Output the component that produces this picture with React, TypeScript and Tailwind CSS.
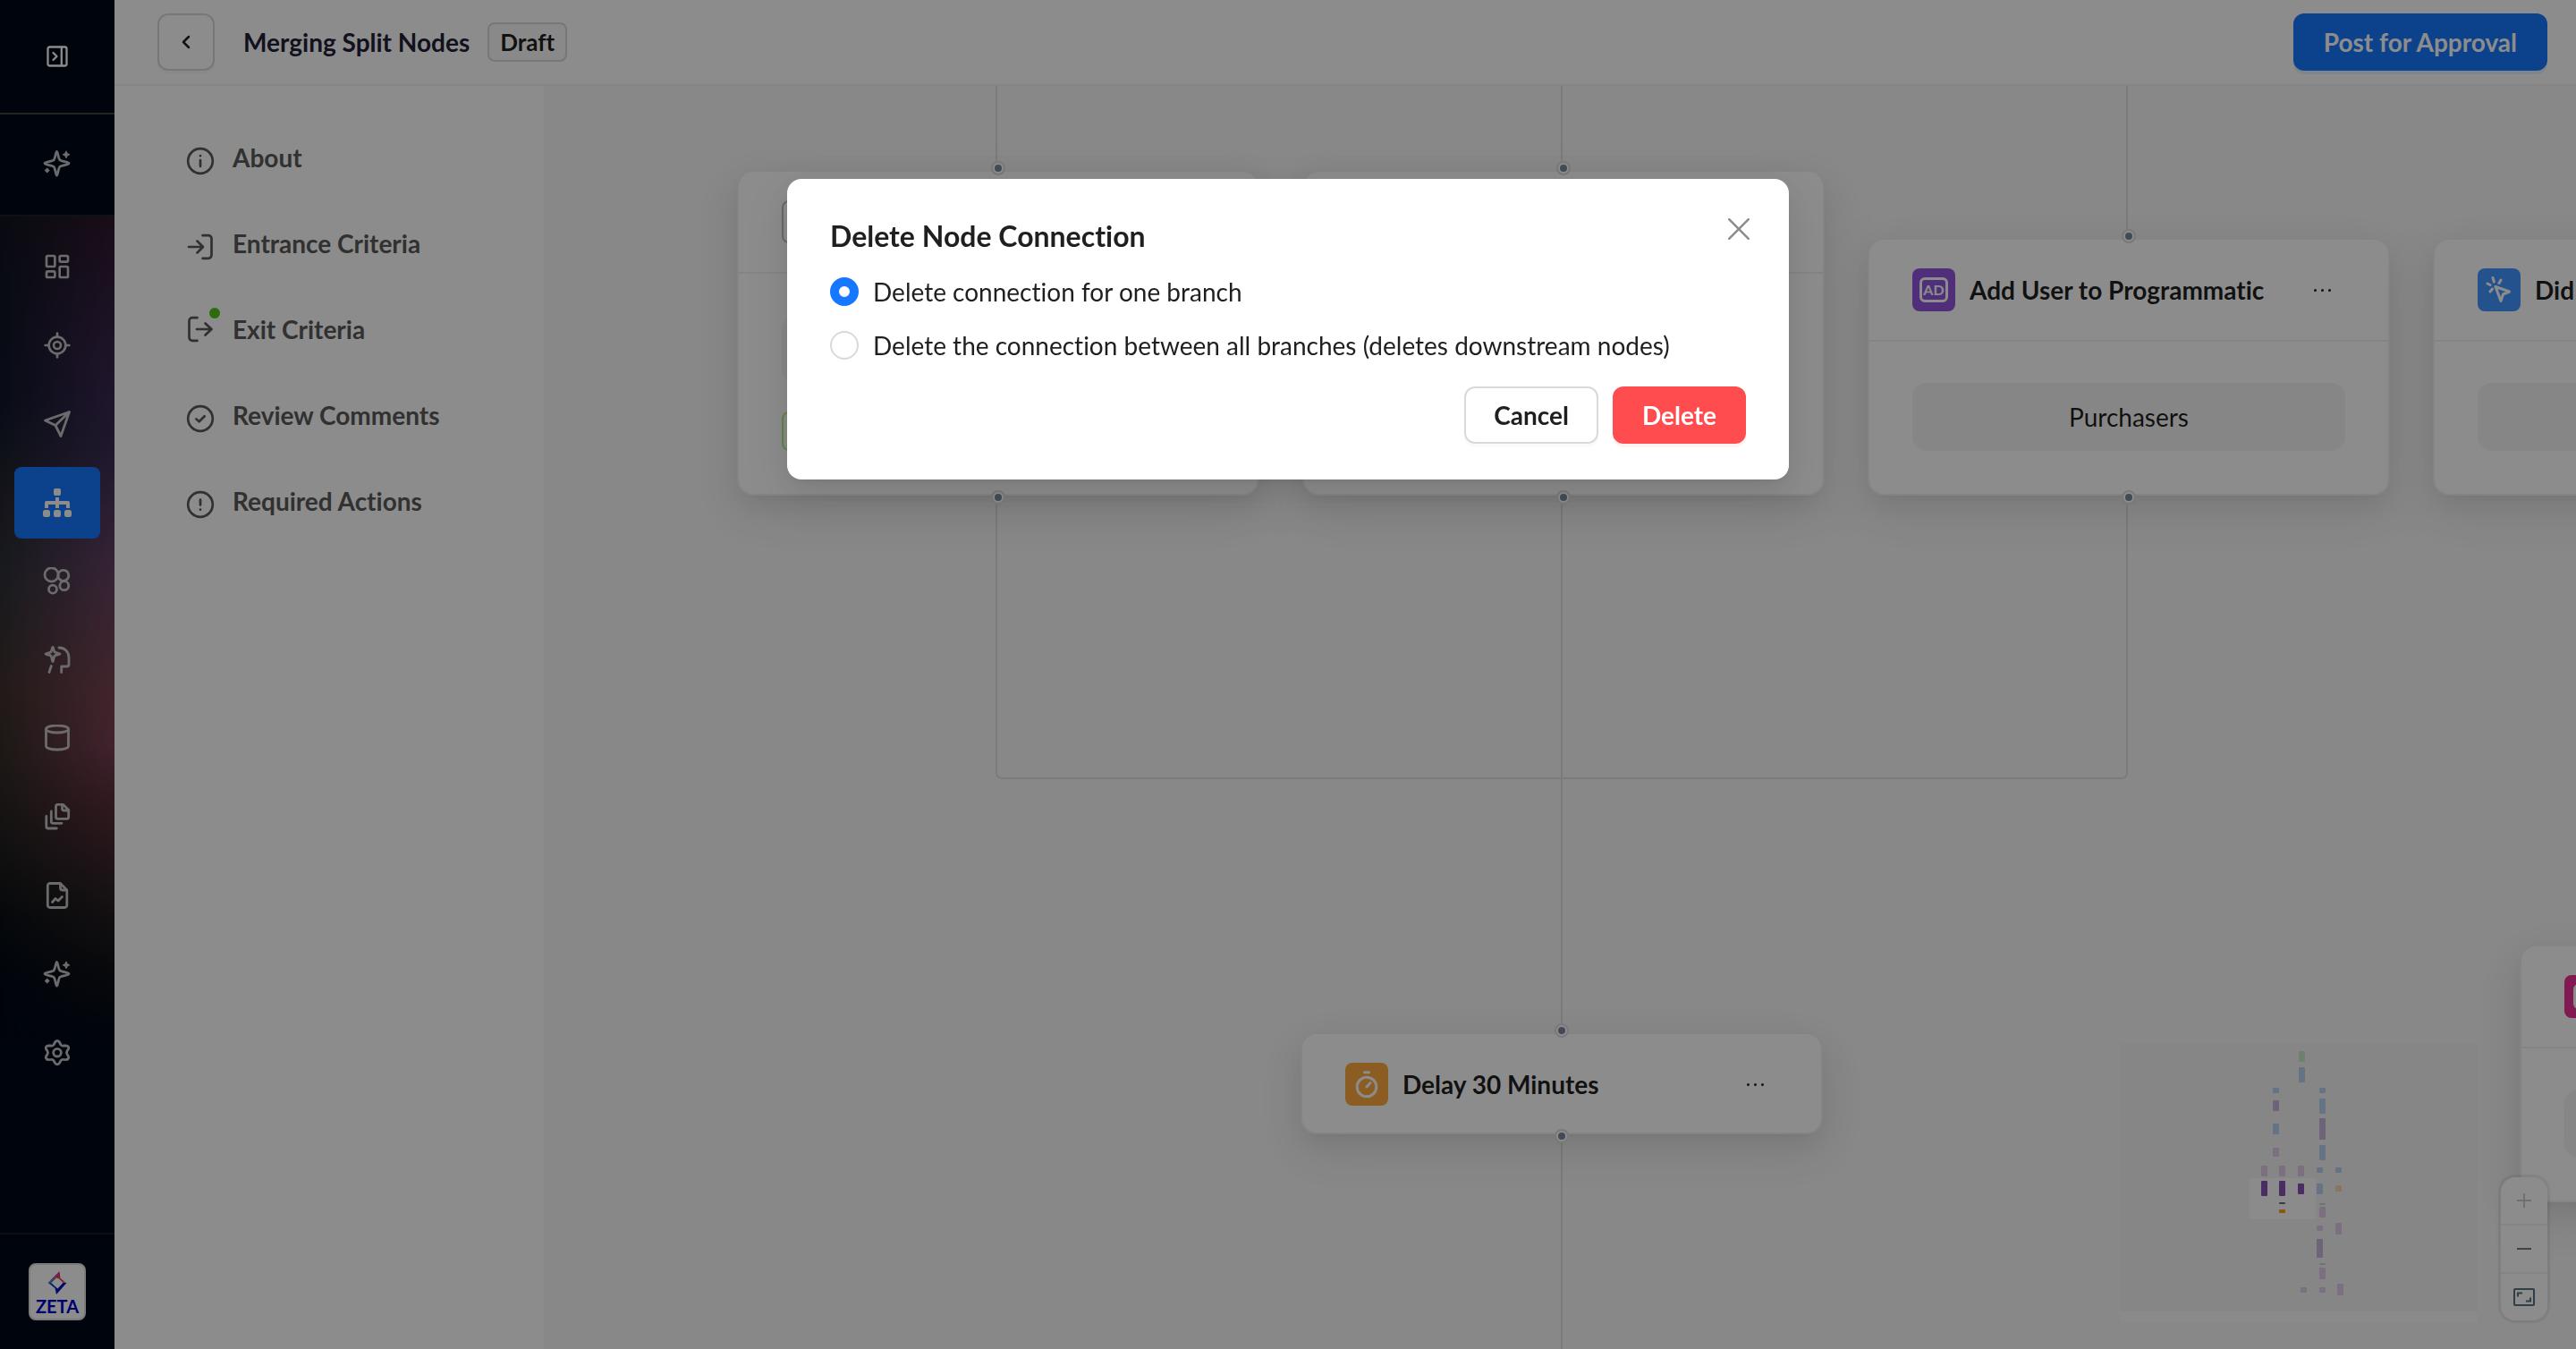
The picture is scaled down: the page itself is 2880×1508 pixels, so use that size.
import type { ReactNode } from "react"
import { ChevronLeft, LayoutDashboard, LocateFixed } from "lucide-react"

const strokeProps = {
  fill: "none",
  stroke: "currentColor",
  strokeWidth: 2.8,
  strokeLinecap: "round",
  strokeLinejoin: "round",
} as const

function SparklesIcon() {
  return (
    <svg viewBox="0 0 32 32" className="size-8" aria-hidden="true">
      <path {...strokeProps} d="M15.5 1.5c1.2 0 1.5 7 3.2 9.2 1.600 2 10.300 2 10.300 3.900s-8.700 1.900-10.300 3.900c-1.700 2.200-2 9.500-3.200 9.500s-1.500-7.300-3.200-9.500c-1.600-2-10.300-2-10.300-3.900s8.700-1.900 10.300-3.900c1.700-2.200 2-9.200 3.200-9.200z" />
      <path fill="currentColor" d="M26 .5c.8 0 1.200 2.300 1.600 2.700s2.700.8 2.700 1.600-2.300 1.200-2.700 1.600-.8 2.700-1.600 2.700-1.200-2.300-1.600-2.700-2.700-.8-2.700-1.600 2.300-1.200 2.700-1.600.8-2.700 1.600-2.700zM4.700 19.500l3 3-3 3-3-3z" />
    </svg>
  )
}

function SendIcon() {
  return (
    <svg viewBox="0 0 32 32" className="size-8" aria-hidden="true">
      <path {...strokeProps} d="M29.500 2.500 2.500 12l11.500 5.500L20 29.500zM29.500 2.500 14 17.500" />
    </svg>
  )
}

function SitemapIcon() {
  return (
    <svg viewBox="0 0 32 32" className="size-8" fill="currentColor" aria-hidden="true">
      <rect x="12" width="8" height="8" rx="2" />
      <rect y="24" width="8" height="8" rx="2.500" />
      <rect x="12" y="24" width="8" height="8" rx="2.500" />
      <rect x="24" y="24" width="8" height="8" rx="2.500" />
      <path d="M14 10h4v4h10a2 2 0 0 1 2 2v6h-4v-4h-8v4h-4v-4H6v4H2v-6a2 2 0 0 1 2-2h10z" />
    </svg>
  )
}

function SegmentsIcon() {
  return (
    <svg viewBox="0 0 32 32" className="size-8" aria-hidden="true">
      <g {...strokeProps}>
        <circle cx="9.600" cy="8.500" r="7.600" />
        <circle cx="22.800" cy="9.300" r="6" />
        <circle cx="23.800" cy="20.700" r="5" />
        <circle cx="11" cy="24.700" r="4.500" />
      </g>
    </svg>
  )
}

function MindIcon() {
  return (
    <svg viewBox="0 0 32 32" className="size-8" aria-hidden="true">
      <g {...strokeProps}>
        <path d="M18 2c6 0 11 4.500 11 11v7.500a2.500 2.500 0 0 1-2.500 2.500h-5.800v6.500M9.300 22.500 7 29.500" />
        <path d="M11 1.500c.8 0 1 4.200 2 5.300s6 1.400 6 2.200-5 1.100-6 2.200-1.200 6.300-2 6.300-1-5.200-2-6.300-6-1.400-6-2.200 5-1.100 6-2.200 1.200-5.300 2-5.300z" />
      </g>
    </svg>
  )
}

function DatabaseIcon() {
  return (
    <svg viewBox="0 0 32 32" className="size-8" aria-hidden="true">
      <g {...strokeProps}>
        <ellipse cx="16" cy="5" rx="12.500" ry="4" />
        <path d="M3.500 5v19c0 2.300 5.500 4 12.500 4s12.500-1.700 12.500-4V5" />
      </g>
    </svg>
  )
}

function FilesIcon() {
  return (
    <svg viewBox="0 0 32 32" className="size-8" aria-hidden="true">
      <g {...strokeProps}>
        <path d="M22.500 1.300H16.500a2 2 0 0 0-2 2v12a2 2 0 0 0 2 2h10.200a2 2 0 0 0 2-2V7.500z" />
        <path d="M21.500 1.500v4.500a2 2 0 0 0 2 2h5" />
        <path d="M9.300 9v11.300a2 2 0 0 0 2 2H21" />
        <path d="M3.800 14.500V26a2 2 0 0 0 2 2h9.500" />
      </g>
    </svg>
  )
}

function FileChartIcon() {
  return (
    <svg viewBox="0 0 32 32" className="size-8" aria-hidden="true">
      <g {...strokeProps}>
        <path d="M19.500 1.500H7.800a2.500 2.500 0 0 0-2.500 2.500v22a2.500 2.500 0 0 0 2.500 2.500h16.500a2.500 2.500 0 0 0 2.500-2.500V9z" />
        <path d="M19.500 1.800V6.500a2.500 2.500 0 0 0 2.500 2.500h4.500" />
        <path d="m10.500 22.500 3.500-4 3 2.500 4.500-4.500" />
      </g>
    </svg>
  )
}

function GearIcon() {
  return (
    <svg viewBox="0 0 32 32" className="size-8" aria-hidden="true">
      <g {...strokeProps}>
        <path d="M13.500 3Q16 0 18.500 3L20 6Q21 7.300 23 7L26 6.800Q29.500 7.500 28.500 10.500L27 13Q26 14.700 27 16.400L28.500 19Q29.500 22 26 22.600L23 22.400Q21 22.200 20 23.500L18.500 26.400Q16 29.400 13.500 26.400L12 23.500Q11 22.200 9 22.400L6 22.600Q2.500 22 3.500 19L5 16.400Q6 14.700 5 13L3.500 10.500Q2.500 7.500 6 6.800L9 7Q11 7.300 12 6Z" />
        <circle cx="16" cy="14.700" r="4.300" />
      </g>
    </svg>
  )
}

const navItems: { label: string; icon: ReactNode; active?: boolean }[] = [
  { label: "Dashboard", icon: <LayoutDashboard className="size-8" /> },
  { label: "Opportunities", icon: <LocateFixed className="size-8" /> },
  { label: "Campaigns", icon: <SendIcon /> },
  { label: "Experiences", icon: <SitemapIcon />, active: true },
  { label: "Audiences", icon: <SegmentsIcon /> },
  { label: "Intelligence", icon: <MindIcon /> },
  { label: "Data", icon: <DatabaseIcon /> },
  { label: "Content", icon: <FilesIcon /> },
  { label: "Reports", icon: <FileChartIcon /> },
  { label: "Assistant", icon: <SparklesIcon /> },
  { label: "Settings", icon: <GearIcon /> },
]

function Sidebar() {
  return (
    <aside className="relative flex w-32 shrink-0 flex-col bg-[#000816] text-[#c4c4c4]">
      {/* Ambient glow behind the navigation */}
      <div className="pointer-events-none absolute inset-x-0 top-[242px] h-[920px] bg-[linear-gradient(to_bottom,#10131f_0%,#0f1628_22%,#24262f_34%,#2d3136_44%,#3e312f_57%,#332c28_66%,#1d1d1d_78%,#0b1014_85%,#000816_94%)]" />
      <div className="pointer-events-none absolute inset-x-0 top-[242px] h-[920px] bg-[linear-gradient(to_bottom,#2f192c_0%,#3a264c_17%,#3a2c54_28%,#624162_42%,#784350_58%,#784052_64%,#572d38_72%,#2a2124_83%,#121216_91%,#000816_100%)] [mask-image:linear-gradient(to_right,transparent,black)]" />

      <div className="relative flex h-32 items-center justify-center border-b-2 border-[#404040]">
        <button type="button" aria-label="Expand sidebar" className="text-white">
          <svg viewBox="0 0 24 24" className="size-6" fill="none" stroke="currentColor" strokeWidth="2.300" strokeLinejoin="round" strokeLinecap="round" aria-hidden="true">
            <rect x="1.500" y="1.500" width="21" height="21" rx="2" />
            <path d="M16.800 2v20M7.500 8l4 4-4 4" />
          </svg>
        </button>
      </div>
      <div className="relative border-b-2 border-[#1a1f2c] px-4 py-4">
        <button type="button" aria-label="Ask assistant" className="flex h-20 w-full items-center justify-center">
          <SparklesIcon />
        </button>
      </div>
      <nav className="relative flex flex-1 flex-col gap-2 p-4">
        {navItems.map((item) => (
          <a
            key={item.label}
            href="#"
            aria-label={item.label}
            className={
              item.active
                ? "flex h-20 items-center justify-center rounded-lg bg-[#1677ff] text-white"
                : "flex h-20 items-center justify-center rounded-lg"
            }
          >
            {item.icon}
          </a>
        ))}
      </nav>
      <div className="relative flex justify-center border-t-2 border-[#161a26] py-8">
        <div className="flex size-16 flex-col items-center justify-center rounded-lg border-2 border-[#e0e0e0] bg-white pt-1">
          <svg viewBox="0 0 24 28" className="h-7 w-6" aria-hidden="true">
            <defs>
              <linearGradient id="spark-top" x1="0" y1="0" x2="1" y2="0">
                <stop offset="0" stopColor="#1aa0e0" />
                <stop offset="0.500" stopColor="#e03a7a" />
                <stop offset="0.750" stopColor="#e04060" />
                <stop offset="1" stopColor="#ffe040" />
              </linearGradient>
              <linearGradient id="spark-bottom" x1="0" y1="0" x2="1" y2="0">
                <stop offset="0" stopColor="#1a90e0" />
                <stop offset="0.400" stopColor="#0018c8" />
                <stop offset="1" stopColor="#0000c8" />
              </linearGradient>
            </defs>
            <path d="M1.500 14 14.500 1l1 8 7 5h-4l-4.500-4.500L11 8.500 5.500 14z" fill="url(#spark-top)" />
            <path d="M1.500 14h4l4.500 4.500 2.500 2L18.500 14h4L11 27 9.500 20z" fill="url(#spark-bottom)" />
          </svg>
          <span className="text-[20px] leading-6 font-bold text-[#0000c8]">ZETA</span>
        </div>
      </div>
    </aside>
  )
}

function Header() {
  return (
    <header className="flex h-24 items-center border-b-2 border-[#f0f0f0] bg-white pr-8 pl-12">
      <button
        type="button"
        aria-label="Back"
        className="flex size-16 items-center justify-center rounded-xl border-2 border-[#d9d9d9] bg-white text-black/88 shadow-[0_4px_0_rgba(0,0,0,0.02)]"
      >
        <ChevronLeft className="size-6" strokeWidth={2.500} />
      </button>
      <h1 className="ml-8 text-[28px] leading-11 font-bold text-[#1f2138]">Merging Split Nodes</h1>
      <span className="ml-5 rounded-lg border-2 border-[#d9d9d9] bg-[#fafafa] px-3 text-[26px] leading-10 font-bold text-black/88">
        Draft
      </span>
      <button
        type="button"
        className="ml-auto h-16 rounded-xl bg-[#1677ff] px-[34px] text-[28px] font-bold text-white shadow-[0_4px_0_rgba(5,145,255,0.1)]"
      >
        Post for Approval
      </button>
    </header>
  )
}

const menuItems = [
  {
    label: "About",
    icon: (
      <>
        <circle cx="16" cy="16" r="13.800" />
        <path d="M16 15v7M16 10v.2" />
      </>
    ),
  },
  {
    label: "Entrance Criteria",
    icon: <path d="M3 16h16M12.500 9.500l6.500 6.500-6.500 6.500M18.500 3.200h6.500a3.500 3.500 0 0 1 3.500 3.500v18.600a3.500 3.500 0 0 1-3.500 3.500h-6.500" />,
  },
  {
    label: "Exit Criteria",
    icon: <path d="M12.500 3.200H7a3.500 3.500 0 0 0-3.500 3.500v18.600a3.500 3.500 0 0 0 3.500 3.500h5.500M12 16h16.500M21.500 9.500l7 6.500-7 6.500" />,
    changed: true,
  },
  {
    label: "Review Comments",
    icon: (
      <>
        <circle cx="16" cy="16" r="13.800" />
        <path d="m11.500 16.500 3.200 2.800 6-6" />
      </>
    ),
  },
  {
    label: "Required Actions",
    icon: (
      <>
        <circle cx="16" cy="16" r="13.800" />
        <path d="M16 10.500v6M16 21.500v.2" />
      </>
    ),
  },
]

function JourneyMenu() {
  return (
    <nav className="w-[480px] shrink-0 bg-white pt-8 pl-20">
      <ul>
        {menuItems.map((item) => (
          <li key={item.label} className="flex h-24 items-center">
            <a href="#" className="flex items-center gap-5 text-[28px] leading-11 font-bold text-[#595959]">
              <span className={item.changed ? "relative" : "relative pt-2"}>
                <svg
                  viewBox="0 0 32 32"
                  className="size-8"
                  fill="none"
                  stroke="currentColor"
                  strokeWidth="2.700"
                  strokeLinecap="round"
                  strokeLinejoin="round"
                  aria-hidden="true"
                >
                  {item.icon}
                </svg>
                {item.changed && <span className="absolute -top-2 -right-1.5 size-3 rounded-full bg-[#52c41a]" />}
              </span>
              {item.label}
            </a>
          </li>
        ))}
      </ul>
    </nav>
  )
}

function Handle({ className }: { className: string }) {
  return (
    <span
      className={`absolute left-1/2 flex size-4 -translate-x-1/2 items-center justify-center rounded-full border-2 border-[#dcdcdc] bg-white ${className}`}
    >
      <span className="size-2 rounded-full bg-[#7a889f]" />
    </span>
  )
}

interface NodeCardProps {
  position: string
  tile?: string
  icon?: ReactNode
  title: string
  children?: ReactNode
}

function NodeCard({ position, tile = "border-2 border-[#bfbfbf]", icon, title, children }: NodeCardProps) {
  return (
    <article
      className={`absolute w-[580px] rounded-2xl bg-white shadow-[0_0_0_2px_#f0f0f0,0_12px_32px_rgba(0,0,0,0.08),0_6px_12px_-8px_rgba(0,0,0,0.12),0_18px_56px_16px_rgba(0,0,0,0.05)] ${position}`}
    >
      <Handle className="-top-3" />
      <div className={`flex items-center gap-4 pt-8 pr-[54px] pl-12 ${children ? "pb-8" : "pb-[30px]"}`}>
        <span className={`flex size-12 shrink-0 items-center justify-center rounded-lg text-white ${tile}`}>{icon}</span>
        <h2 className="flex-1 text-[28px] leading-11 font-bold whitespace-nowrap text-black/88">{title}</h2>
        <button type="button" aria-label="Node actions" className="flex size-10 items-center justify-center gap-[5px]">
          <span className="size-[3px] rounded-full bg-black/88" />
          <span className="size-[3px] rounded-full bg-black/88" />
          <span className="size-[3px] rounded-full bg-black/88" />
        </button>
      </div>
      {children && <div className="border-t-2 border-[#f0f0f0] px-12 pt-[46px] pb-12">{children}</div>}
      <Handle className="-bottom-3" />
    </article>
  )
}

function Pill({ children }: { children?: ReactNode }) {
  return (
    <div className="flex h-19 items-center justify-center rounded-2xl bg-[#f5f5f5] text-[28px] leading-11 text-black/88">
      {children}
    </div>
  )
}

const minimapNodes = [
  { x: 200, y: 9, h: 12, fill: "#c8ecc8" },
  { x: 200, y: 27, h: 17, fill: "#bad2f0" },
  { x: 171, y: 50, h: 6, fill: "#bad2f0" },
  { x: 171, y: 64, h: 12, fill: "#c8b4da" },
  { x: 171, y: 90, h: 12, fill: "#bad2f0" },
  { x: 171, y: 117, h: 10, fill: "#decce9" },
  { x: 223, y: 50, h: 6, fill: "#bad2f0" },
  { x: 223, y: 62, h: 17, fill: "#bad2f0" },
  { x: 223, y: 84, h: 24, fill: "#c8b4da" },
  { x: 223, y: 114, h: 17, fill: "#bad2f0" },
  { x: 223, y: 179, h: 2, fill: "#c5d5d2" },
  { x: 223, y: 183, h: 12, fill: "#decce9" },
  { x: 223, y: 246, h: 2, fill: "#c5d5d2" },
  { x: 223, y: 251, h: 13, fill: "#decce9" },
  { x: 158, y: 137, h: 12, fill: "#decce9" },
  { x: 158, y: 154, h: 17, fill: "#8755b2" },
  { x: 178, y: 137, h: 12, fill: "#decce9" },
  { x: 178, y: 154, h: 17, fill: "#8755b2" },
  { x: 178, y: 178, h: 2, fill: "#56737c" },
  { x: 178, y: 186, h: 4, fill: "#faa019" },
  { x: 199, y: 137, h: 12, fill: "#decce9" },
  { x: 199, y: 157, h: 12, fill: "#8755b2" },
  { x: 220, y: 139, h: 6, fill: "#bad2f0" },
  { x: 220, y: 157, h: 12, fill: "#bad2f0" },
  { x: 220, y: 204, h: 6, fill: "#decce9" },
  { x: 220, y: 219, h: 21, fill: "#c8b4da" },
  { x: 241, y: 139, h: 6, fill: "#bad2f0" },
  { x: 241, y: 159, h: 7, fill: "#f7d9b0" },
  { x: 241, y: 201, h: 13, fill: "#decce9" },
  { x: 202, y: 273, h: 6, fill: "#decce9" },
  { x: 223, y: 273, h: 6, fill: "#decce9" },
  { x: 243, y: 269, h: 13, fill: "#decce9" },
]

function Minimap() {
  return (
    <div className="absolute right-[110px] bottom-[30px] bg-[#fcfcfc] pb-3">
      <svg viewBox="0 0 400 300" className="h-[300px] w-[400px] bg-[#f4f4f4]" role="img" aria-label="Minimap">
        <rect x="145" y="151" width="74" height="46" fill="#fdfdfd" />
        {minimapNodes.map((node) => (
          <rect key={`${node.x}-${node.y}`} x={node.x} y={node.y} width="7" height={node.h} rx="1" fill={node.fill} />
        ))}
      </svg>
    </div>
  )
}

function ZoomControls() {
  return (
    <div className="absolute right-8 bottom-8 flex w-13 flex-col rounded-2xl bg-white shadow-[0_0_0_3px_rgba(0,0,0,0.05),0_0_8px_rgba(0,0,0,0.06)]">
      <button type="button" aria-label="Zoom in" className="flex h-13 items-center justify-center text-[#cccccc]">
        <svg viewBox="0 0 16 16" className="size-4" stroke="currentColor" strokeWidth="2" aria-hidden="true">
          <path d="M8 0v16M0 8h16" />
        </svg>
      </button>
      <button type="button" aria-label="Zoom out" className="box-content flex h-13 items-center justify-center border-y-2 border-[#f0f0f0] text-[#7a7a7a]">
        <svg viewBox="0 0 16 16" className="size-4" stroke="currentColor" strokeWidth="2" aria-hidden="true">
          <path d="M0 8h16" />
        </svg>
      </button>
      <button type="button" aria-label="Fit view" className="flex h-13 items-center justify-center text-[#56737c]">
        <svg viewBox="0 0 24 20" className="h-5 w-6" fill="none" stroke="currentColor" strokeWidth="2" aria-hidden="true">
          <rect x="1" y="1" width="22" height="18" rx="1" />
          <path d="M5 9.500V5.500h5M19 10.500v4h-5" />
        </svg>
      </button>
    </div>
  )
}

function JourneyCanvas() {
  return (
    <main className="relative flex-1 overflow-hidden bg-[#f8f8f8]">
      {/* Connections */}
      <svg className="absolute inset-0 size-full" fill="none" stroke="#e0e0e0" strokeWidth="2" aria-hidden="true">
        <path d="M506 0V86M506 460V768a6 6 0 0 0 6 6H1764a6 6 0 0 0 6-6V460M1770 0V164" />
        <path d="M1138 0V86M1138 460V1052M1138 1176V1412" />
      </svg>

      <NodeCard position="left-[218px] top-24" title="">
        <Pill />
        <div className="mt-8 h-11 w-40 rounded-lg border-2 border-[#b7eb8f] bg-[#f6ffed]" />
      </NodeCard>
      <NodeCard position="left-[850px] top-24" title="">
        <Pill />
        <div className="mt-8 h-11 w-40 rounded-lg border-2 border-[#b7eb8f] bg-[#f6ffed]" />
      </NodeCard>
      <NodeCard
        position="left-[1482px] top-[172px]"
        tile="bg-[#9254de]"
        title="Add User to Programmatic"
        icon={
          <span className="flex h-7 w-8 items-center justify-center rounded-md border-[3px] border-white text-[16px] leading-none font-bold">
            AD
          </span>
        }
      >
        <Pill>Purchasers</Pill>
      </NodeCard>
      <NodeCard
        position="left-[2114px] top-[172px]"
        tile="bg-[#4096ff]"
        title="Did"
        icon={
          <svg viewBox="0 0 48 48" className="size-12" {...strokeProps} strokeWidth={3} aria-hidden="true">
            <path d="m20 20.500 15.500 5.500-7 3-2.500 7.500zM17 10.500l1.300 4.500M26 13l-2 3.500M11 17l3 1.500M16.500 23l-2.500 3" />
          </svg>
        }
      >
        <Pill />
      </NodeCard>
      <NodeCard
        position="left-[848px] top-[1060px]"
        tile="bg-[#ffa940]"
        title="Delay 30 Minutes"
        icon={
          <svg viewBox="0 0 48 48" className="size-12" {...strokeProps} strokeWidth={3} aria-hidden="true">
            <circle cx="24" cy="27" r="10.800" />
            <path d="M21.500 10.700h5M24 27l4-4.500" />
          </svg>
        }
      />
      <NodeCard
        position="left-[2211px] top-[962px]"
        tile="bg-[#eb2f96]"
        title=""
        icon={<span className="h-7 w-7 rounded-md border-[3px] border-white" />}
      >
        <Pill />
      </NodeCard>

      <Minimap />
      <ZoomControls />
    </main>
  )
}

const deleteOptions = [
  { value: "one", label: "Delete connection for one branch" },
  { value: "all", label: "Delete the connection between all branches (deletes downstream nodes)" },
]

function DeleteConnectionModal() {
  return (
    <div className="fixed inset-0 bg-black/45 pt-[200px]">
      <div
        role="dialog"
        aria-modal="true"
        aria-labelledby="delete-title"
        className="relative mx-auto w-full max-w-[1120px] rounded-2xl bg-white px-12 py-10 text-black/88 shadow-[0_12px_32px_rgba(0,0,0,0.08),0_6px_12px_-8px_rgba(0,0,0,0.12),0_18px_56px_16px_rgba(0,0,0,0.05)]"
      >
        <h2 id="delete-title" className="text-[32px] leading-12 font-bold">
          Delete Node Connection
        </h2>
        <button
          type="button"
          aria-label="Close"
          className="absolute top-8 right-8 flex size-12 items-center justify-center text-[#8c8c8c]"
        >
          <svg viewBox="0 0 24 24" className="size-6" stroke="currentColor" strokeWidth="2.500" strokeLinecap="round" aria-hidden="true">
            <path d="M1.200 1.200l21.600 21.600M22.800 1.200 1.200 22.800" />
          </svg>
        </button>
        <div className="mt-4 flex flex-col gap-4">
          {deleteOptions.map((option) => (
            <label key={option.value} className="flex items-center gap-4 text-[28px] leading-11">
              <input
                type="radio"
                name="delete-scope"
                value={option.value}
                defaultChecked={option.value === "one"}
                className="size-8 shrink-0 appearance-none rounded-full border-2 border-[#d9d9d9] bg-white checked:border-[10px] checked:border-[#1677ff]"
              />
              {option.label}
            </label>
          ))}
        </div>
        <div className="mt-6 flex justify-end gap-4 text-[28px] font-bold">
          <button
            type="button"
            className="h-16 rounded-xl border-2 border-[#d9d9d9] bg-white px-[31px] shadow-[0_4px_0_rgba(0,0,0,0.02)]"
          >
            Cancel
          </button>
          <button type="button" className="h-16 rounded-xl bg-[#ff4d4f] px-[33px] text-white shadow-[0_4px_0_rgba(255,38,5,0.06)]">
            Delete
          </button>
        </div>
      </div>
    </div>
  )
}

export default function App() {
  return (
    <div className="flex min-h-screen font-[Lato,'Open_Sans',sans-serif] [font-variant-ligatures:none]">
      <Sidebar />
      <div className="flex min-w-0 flex-1 flex-col">
        <Header />
        <div className="flex flex-1">
          <JourneyMenu />
          <JourneyCanvas />
        </div>
      </div>
      <DeleteConnectionModal />
    </div>
  )
}
